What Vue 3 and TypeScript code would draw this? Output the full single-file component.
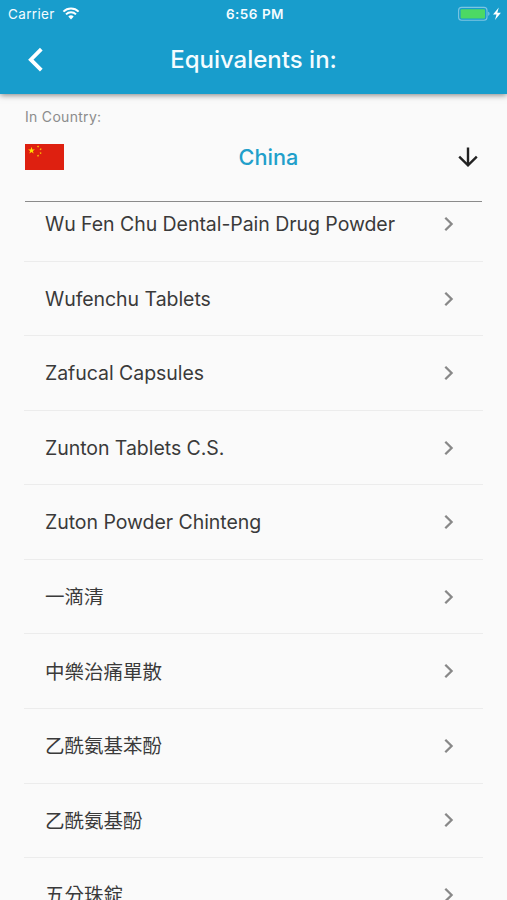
<script setup lang="ts">
interface Medicine {
  name: string
  cls: string
}

const medicines: Medicine[] = [
  { name: 'Wu Fen Chu Dental-Pain Drug Powder', cls: 'latin' },
  { name: 'Wufenchu Tablets', cls: 'latin' },
  { name: 'Zafucal Capsules', cls: 'latin' },
  { name: 'Zunton Tablets C.S.', cls: 'latin' },
  { name: 'Zuton Powder Chinteng', cls: 'latin' },
  { name: '一滴清', cls: 'han' },
  { name: '中樂治痛單散', cls: 'han' },
  { name: '乙酰氨基苯酚', cls: 'han' },
  { name: '乙酰氨基酚', cls: 'han' },
  { name: '五分珠錠', cls: 'han' },
]
</script>

<template>
  <main class="screen">
    <header class="top">
      <div class="status">
        <div class="carrier">
          <span>Carrier</span>
          <svg class="wifi" viewBox="0 0 18 13" width="18" height="13">
            <path d="M1.4 4.6a10.8 10.8 0 0 1 15.2 0" />
            <path d="M4 7.4a7.1 7.1 0 0 1 10 0" />
            <path class="dot" d="M6.3 9.6a3.9 3.9 0 0 1 5.4 0L9 12.4z" />
          </svg>
        </div>
        <span class="clock">6:56 PM</span>
        <div class="power">
          <svg width="44" height="16" viewBox="0 0 44 16">
            <rect x=".6" y="1.4" width="28.4" height="12.8" rx="3" fill="none" stroke="#7cc5e2" stroke-width="1.1" />
            <rect x="2.6" y="3.2" width="24.4" height="9.2" rx="1" fill="#4cd964" />
            <path d="M30.2 5.8c1.8.5 1.8 3.5 0 4z" fill="#7cc5e2" />
            <path d="M40.8 1.6 35 8.4h3.5l-1.5 5.6 5.9-7.3h-3.6z" fill="#fff" />
          </svg>
        </div>
      </div>
      <div class="bar">
        <svg class="back" width="16" height="26" viewBox="0 0 16 26">
          <path d="M14.3 2.2 3.8 12.7 14.3 23.2" />
        </svg>
        <h1>Equivalents in:</h1>
      </div>
    </header>

    <section class="country">
      <div class="label">In Country:</div>
      <div class="picker">
        <svg class="flag" width="39" height="26" viewBox="0 0 30 20">
          <defs>
            <polygon id="star" points="0,-1 .225,-.309 .951,-.309 .363,.118 .588,.809 0,.382 -.588,.809 -.363,.118 -.951,-.309 -.225,-.309" />
          </defs>
          <rect width="30" height="20" fill="#de2010" />
          <g fill="#ffde00">
            <use href="#star" transform="translate(5 5) scale(2.8)" />
            <use href="#star" transform="translate(10 2) rotate(23) scale(1)" />
            <use href="#star" transform="translate(12 4) rotate(46) scale(1)" />
            <use href="#star" transform="translate(12 7) scale(1)" />
            <use href="#star" transform="translate(10 9) rotate(20) scale(1)" />
          </g>
        </svg>
        <span class="chosen">China</span>
        <svg class="down" width="20" height="20" viewBox="0 0 20 20">
          <path d="M10 .4v17.8M1.2 9.6 10 18.3l8.8-8.7" />
        </svg>
      </div>
    </section>

    <div class="viewport">
      <ul class="list">
        <li v-for="m in medicines" :key="m.name">
          <span :class="m.cls">{{ m.name }}</span>
          <svg width="10" height="16" viewBox="0 0 10 16">
            <path d="M1.3 1.7 7.6 8l-6.3 6.3" />
          </svg>
        </li>
      </ul>
    </div>
  </main>
</template>

<style>
body {
  background: #fafafa;
  overflow: hidden;
}
</style>

<style scoped>
* {
  box-sizing: border-box;
}
.screen {
  height: 900px;
  display: flex;
  flex-direction: column;
  overflow: hidden;
  background: #fafafa;
  font-family: Inter, "Noto Sans CJK TC", sans-serif;
  color: #3a3a3a;
}
.top {
  flex: none;
  height: 94px;
  background: #189dcc;
  color: #f4fcff;
  box-shadow: 0 1px 6px rgba(0, 0, 0, 0.5);
}
.status {
  height: 27px;
  padding: 0 5px 0 8px;
  display: grid;
  grid-template-columns: 1fr auto 1fr;
  align-items: center;
  font-size: 13.5px;
}
.carrier {
  display: flex;
  align-items: center;
  gap: 7px;
  letter-spacing: 0.35px;
}
.wifi {
  fill: none;
  stroke: #fff;
  stroke-width: 2;
}
.wifi .dot {
  fill: #fff;
  stroke: none;
}
.clock {
  font-weight: 600;
  letter-spacing: 0.5px;
}
.power {
  display: flex;
  justify-content: flex-end;
}
.power svg {
  display: block;
}
.bar {
  height: 66px;
  padding: 0 27px;
  display: grid;
  grid-template-columns: 16px 1fr 16px;
  align-items: center;
}
.back {
  fill: none;
  stroke: #fff;
  stroke-width: 3.8;
}
h1 {
  margin: 0;
  text-align: center;
  font-size: 24px;
  line-height: 30px;
  font-weight: 500;
}
.country {
  flex: none;
  height: 108px;
  margin: 0 25px;
  padding-top: 13px;
  border-bottom: 1.5px solid #8b8b8b;
}
.label {
  height: 20px;
  line-height: 20px;
  font-size: 14px;
  letter-spacing: 0.3px;
  color: #8c8c8c;
}
.picker {
  height: 60px;
  display: grid;
  grid-template-columns: 39px 1fr 29px;
  align-items: center;
}
.chosen {
  padding-left: 20px;
  text-align: center;
  font-size: 21.7px;
  font-weight: 500;
  color: #229fca;
}
.down {
  justify-self: center;
  fill: none;
  stroke: #222;
  stroke-width: 2.4;
}
.viewport {
  flex: 1;
  min-height: 0;
  overflow: hidden;
  padding: 0 24px;
}
.list {
  list-style: none;
  margin: -14.8px 0 0;
  padding: 0;
}
li {
  height: 74.55px;
  padding: 0 29px 0 21px;
  display: flex;
  align-items: center;
  justify-content: space-between;
  border-bottom: 1px solid #ececec;
  font-size: 19.5px;
  white-space: nowrap;
}
.latin {
  letter-spacing: -0.05px;
}
.han {
  padding-bottom: 2px;
}
li svg {
  fill: none;
  stroke: #888;
  stroke-width: 2.3;
}
</style>
